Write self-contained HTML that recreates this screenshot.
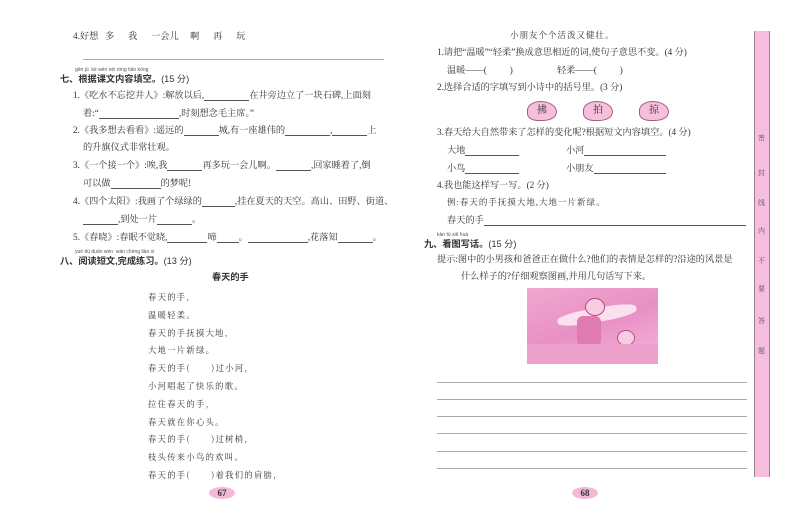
<!DOCTYPE html>
<html><head><meta charset="utf-8"><style>
body{margin:0;width:800px;height:532px;background:#fff;position:relative;overflow:hidden;font-family:"Liberation Serif","Noto Serif CJK SC",serif;color:#333;font-size:9.2px}
.t{position:absolute;white-space:nowrap;line-height:12px}
.b{font-weight:bold;font-family:"Liberation Sans","Noto Sans CJK SC",sans-serif}
.py{position:absolute;font-size:5px;color:#555;font-family:"Liberation Sans",sans-serif;white-space:nowrap}
.u{display:inline-block;border-bottom:1px solid #555;height:10px;vertical-align:bottom}
.hl{position:absolute;height:1px;background:#aaa}
.leaf{position:absolute;width:28px;height:18px;background:#f6bfdc;border:1px solid #a06080;border-radius:50% 60% 50% 40%;text-align:center;line-height:18px;font-size:10px}
.pg{position:absolute;width:26px;height:12px;border-radius:50%;background:#f5b8d8;text-align:center;font-size:9px;font-weight:bold;line-height:12px}
</style></head><body>
<div class="t" style="left:73px;top:30px">4.好想&nbsp;&nbsp;&nbsp;多&nbsp;&nbsp;&nbsp;&nbsp;&nbsp;&nbsp;我&nbsp;&nbsp;&nbsp;&nbsp;&nbsp;&nbsp;一会儿&nbsp;&nbsp;&nbsp;&nbsp;&nbsp;啊&nbsp;&nbsp;&nbsp;&nbsp;&nbsp;&nbsp;再&nbsp;&nbsp;&nbsp;&nbsp;&nbsp;&nbsp;玩</div>
<div class="hl" style="left:83px;top:59px;width:301px"></div>
<div class="py" style="left:75px;top:67px">gēn jù&nbsp; kè wén nèi róng tián kòng</div>
<div class="t b" style="left:60px;top:73px">七、根据课文内容填空。<span style="font-weight:normal">(15 分)</span></div>
<div class="t" style="left:73px;top:89px">1.《吃水不忘挖井人》:解放以后,<span class="u" style="width:45px"></span>在井旁边立了一块石碑,上面刻</div>
<div class="t" style="left:83px;top:107px">着:“<span class="u" style="width:80px"></span>,时刻想念毛主席。”</div>
<div class="t" style="left:73px;top:124px">2.《我多想去看看》:遥远的<span class="u" style="width:35px"></span>城,有一座雄伟的<span class="u" style="width:45px"></span>,<span class="u" style="width:35px"></span>上</div>
<div class="t" style="left:83px;top:141px">的升旗仪式非常壮观。</div>
<div class="t" style="left:73px;top:159px">3.《一个接一个》:唉,我<span class="u" style="width:35px"></span>再多玩一会儿啊。<span class="u" style="width:35px"></span>,回家睡着了,倒</div>
<div class="t" style="left:83px;top:177px">可以做<span class="u" style="width:50px"></span>的梦呢!</div>
<div class="t" style="left:73px;top:195px">4.《四个太阳》:我画了个绿绿的<span class="u" style="width:33px"></span>,挂在夏天的天空。高山、田野、街道、</div>
<div class="t" style="left:83px;top:213px"><span class="u" style="width:35px"></span>,到处一片<span class="u" style="width:35px"></span>。</div>
<div class="t" style="left:73px;top:231px">5.《春晓》:春眠不觉晓,<span class="u" style="width:40px"></span>啼<span class="u" style="width:22px"></span>。<span class="u" style="width:60px"></span>,花落知<span class="u" style="width:35px"></span>。</div>
<div class="py" style="left:75px;top:249px">yuè dú duǎn wén&nbsp; wán chéng liàn xí</div>
<div class="t b" style="left:60px;top:255px">八、阅读短文,完成练习。<span style="font-weight:normal">(13 分)</span></div>
<div class="t b" style="left:212px;top:271px">春天的手</div>
<div style="position:absolute;left:148px;top:289px;line-height:17.8px;font-size:8.3px;letter-spacing:1.3px;font-family:'Noto Serif CJK SC',serif">
春天的手,<br>温暖轻柔。<br>春天的手抚摸大地,<br>大地一片新绿。<br>春天的手(&nbsp;&nbsp;&nbsp;&nbsp;&nbsp;&nbsp;)过小河,<br>小河唱起了快乐的歌。<br>拉住春天的手,<br>春天就在你心头。<br>春天的手(&nbsp;&nbsp;&nbsp;&nbsp;&nbsp;&nbsp;)过树梢,<br>枝头传来小鸟的欢叫。<br>春天的手(&nbsp;&nbsp;&nbsp;&nbsp;&nbsp;&nbsp;)着我们的肩膀,</div>
<div class="pg" style="left:209px;top:487px">67</div>

<div class="t" style="left:510px;top:29px;font-size:8.5px;letter-spacing:1px">小朋友个个活泼又健壮。</div>
<div class="t" style="left:437px;top:46px">1.请把“温暖”“轻柔”换成意思相近的词,使句子意思不变。(4 分)</div>
<div class="t" style="left:447px;top:64px">温暖——(&nbsp;&nbsp;&nbsp;&nbsp;&nbsp;&nbsp;&nbsp;&nbsp;&nbsp;&nbsp;)</div>
<div class="t" style="left:557px;top:64px">轻柔——(&nbsp;&nbsp;&nbsp;&nbsp;&nbsp;&nbsp;&nbsp;&nbsp;&nbsp;&nbsp;)</div>
<div class="t" style="left:437px;top:81px">2.选择合适的字填写到小诗中的括号里。(3 分)</div>
<div class="leaf" style="left:527px;top:101px">拂</div>
<div class="leaf" style="left:583px;top:101px">拍</div>
<div class="leaf" style="left:639px;top:101px">掠</div>
<div class="t" style="left:437px;top:126px">3.春天给大自然带来了怎样的变化呢?根据短文内容填空。(4 分)</div>
<div class="t" style="left:447px;top:144px">大地<span class="u" style="width:54px"></span></div>
<div class="t" style="left:566px;top:144px">小河<span class="u" style="width:82px"></span></div>
<div class="t" style="left:447px;top:162px">小鸟<span class="u" style="width:54px"></span></div>
<div class="t" style="left:566px;top:162px">小朋友<span class="u" style="width:72px"></span></div>
<div class="t" style="left:437px;top:179px">4.我也能这样写一写。(2 分)</div>
<div class="t" style="left:447px;top:196px;font-size:8.5px;letter-spacing:1px">例:春天的手抚摸大地,大地一片新绿。</div>
<div class="t" style="left:447px;top:214px">春天的手<span class="u" style="width:262px"></span></div>
<div class="py" style="left:437px;top:232px">kàn tú xiě huà</div>
<div class="t b" style="left:424px;top:238px">九、看图写话。<span style="font-weight:normal">(15 分)</span></div>
<div class="t" style="left:437px;top:253px">提示:图中的小男孩和爸爸正在做什么?他们的表情是怎样的?沿途的风景是</div>
<div class="t" style="left:461px;top:270px">什么样子的?仔细观察图画,并用几句话写下来。</div>
<div style="position:absolute;left:527px;top:288px;width:131px;height:76px;background:linear-gradient(160deg,#f0a8d0,#e890c4 50%,#f4b6da);overflow:hidden">
<div style="position:absolute;left:30px;top:20px;width:80px;height:14px;background:#fbe0ef;border-radius:40%;transform:rotate(-10deg)"></div>
<div style="position:absolute;left:58px;top:10px;width:18px;height:16px;background:#f8cce2;border-radius:50%;border:1px solid #b05080"></div>
<div style="position:absolute;left:50px;top:28px;width:24px;height:30px;background:#e07ab0;border-radius:6px"></div>
<div style="position:absolute;left:90px;top:42px;width:16px;height:14px;background:#f8cce2;border-radius:50%;border:1px solid #b05080"></div>
<div style="position:absolute;left:0;top:56px;width:131px;height:20px;background:#eea0cc"></div>
</div>
<div class="hl" style="left:437px;top:382px;width:310px"></div>
<div class="hl" style="left:437px;top:399px;width:310px"></div>
<div class="hl" style="left:437px;top:416px;width:310px"></div>
<div class="hl" style="left:437px;top:433px;width:310px"></div>
<div class="hl" style="left:437px;top:451px;width:310px"></div>
<div class="hl" style="left:437px;top:468px;width:310px"></div>
<div class="pg" style="left:572px;top:487px">68</div>

<div style="position:absolute;left:754px;top:31px;width:14px;height:446px;background:#f6bddf;border-left:1px solid #a08090;border-right:1px solid #a08090"></div>
<div style="position:absolute;left:758px;top:0;font-size:7px;color:#555">
<div style="position:absolute;top:133px">密</div><div style="position:absolute;top:168px">封</div><div style="position:absolute;top:198px">线</div><div style="position:absolute;top:226px">内</div><div style="position:absolute;top:256px">不</div><div style="position:absolute;top:284px">要</div><div style="position:absolute;top:316px">答</div><div style="position:absolute;top:346px">题</div></div>
</body></html>
